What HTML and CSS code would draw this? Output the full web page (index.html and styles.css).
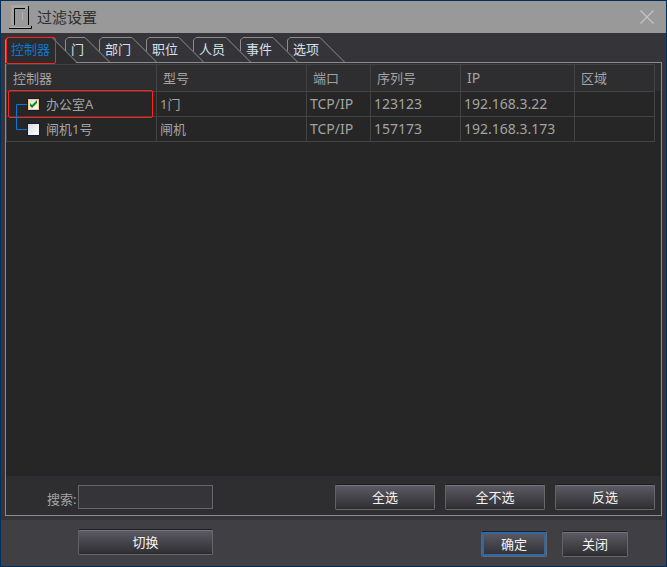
FILE: index.html
```html
<!DOCTYPE html>
<html lang="zh-CN">
<head>
<meta charset="utf-8">
<title>过滤设置</title>
<link rel="stylesheet" href="styles.css">
</head>
<body>
<main class="window">
  <header class="titlebar">
    <svg class="logo" width="24" height="26" viewBox="0 0 24 26" aria-hidden="true">
      <path fill="#a6a6a6" d="M2 1h17v20H2z"/>
      <path fill="#999" d="M6 5h13v16H6z"/>
      <path fill="none" stroke="#000" d="M5.500 21V4.500H16M19.500 2V21M0 24.500H22.500V22"/>
      <path stroke="#b4b4b4" d="M13.500 8v8M1 23.500h20"/>
    </svg>
    <h1 class="title">过滤设置</h1>
    <button class="close" type="button" aria-label="关闭窗口">
      <svg width="14" height="14" viewBox="0 0 14 14" aria-hidden="true"><path d="M.5.500l13 13M13.500.500l-13 13" stroke="#c4c4c4" stroke-width="1.200"/></svg>
    </button>
  </header>

  <section class="body">
    <nav class="tabs" role="tablist">
      <button class="tab tab-wide tab-active" type="button" role="tab" aria-selected="true">
        <svg class="tab-shape" width="74" height="27" aria-hidden="true"><path class="tab-fill" d="M.5 27V3L3 .5H47L72.500 27z"/><path d="M.5 26V3L3 .5H47L72 25.500"/></svg>
        <span class="tab-text">控制器</span>
      </button>
      <button class="tab tab-narrow" type="button" role="tab" aria-selected="false">
        <svg class="tab-shape" width="48" height="26" aria-hidden="true"><path d="M.5 14V3L3 .5H20L45 25.500"/></svg>
        <span class="tab-text">门</span>
      </button>
      <button class="tab" type="button" role="tab" aria-selected="false">
        <svg class="tab-shape" width="60" height="26" aria-hidden="true"><path d="M.5 14V3L3 .5H33L58 25.500"/></svg>
        <span class="tab-text">部门</span>
      </button>
      <button class="tab" type="button" role="tab" aria-selected="false">
        <svg class="tab-shape" width="60" height="26" aria-hidden="true"><path d="M.5 14V3L3 .5H33L58 25.500"/></svg>
        <span class="tab-text">职位</span>
      </button>
      <button class="tab" type="button" role="tab" aria-selected="false">
        <svg class="tab-shape" width="60" height="26" aria-hidden="true"><path d="M.5 14V3L3 .5H33L58 25.500"/></svg>
        <span class="tab-text">人员</span>
      </button>
      <button class="tab" type="button" role="tab" aria-selected="false">
        <svg class="tab-shape" width="60" height="26" aria-hidden="true"><path d="M.5 14V3L3 .5H33L58 25.500"/></svg>
        <span class="tab-text">事件</span>
      </button>
      <button class="tab" type="button" role="tab" aria-selected="false">
        <svg class="tab-shape" width="60" height="26" aria-hidden="true"><path d="M.5 14V3L3 .5H33L58 25.500"/></svg>
        <span class="tab-text">选项</span>
      </button>
    </nav>

    <div class="panel">
      <div class="list">
        <table class="grid">
          <colgroup><col class="c-name"><col class="c-model"><col class="c-port"><col class="c-serial"><col class="c-ip"><col class="c-area"></colgroup>
          <thead>
            <tr><th>控制器</th><th>型号</th><th>端口</th><th>序列号</th><th class="latin">IP</th><th>区域</th></tr>
          </thead>
          <tbody>
            <tr>
              <td class="name name-marked"><svg class="branch" width="12" height="25" aria-hidden="true"><path d="M11 12.500H.5V25"/></svg><input class="check" type="checkbox" id="dev1" checked><label for="dev1">办公室A</label></td>
              <td>1门</td><td class="latin">TCP/IP</td><td class="latin">123123</td><td class="latin">192.168.3.22</td><td></td>
            </tr>
            <tr>
              <td class="name"><svg class="branch" width="12" height="25" aria-hidden="true"><path d="M.5 0V12.500H11"/></svg><input class="check" type="checkbox" id="dev2"><label for="dev2">闸机1号</label></td>
              <td>闸机</td><td class="latin">TCP/IP</td><td class="latin">157173</td><td class="latin">192.168.3.173</td><td></td>
            </tr>
          </tbody>
        </table>
      </div>
      <div class="tools">
        <label class="search-label" for="search">搜索:</label>
        <input class="search" id="search" type="text">
        <div class="picks">
          <button class="btn" type="button">全选</button>
          <button class="btn" type="button">全不选</button>
          <button class="btn" type="button">反选</button>
        </div>
      </div>
    </div>
  </section>

  <footer class="footer">
    <button class="btn btn-switch" type="button">切换</button>
    <div class="actions">
      <button class="btn btn-small btn-default" type="button">确定</button>
      <button class="btn btn-small" type="button">关闭</button>
    </div>
  </footer>
</main>
</body>
</html>
```

FILE: styles.css
```css
* { box-sizing: border-box; }

body {
  margin: 0;
  background: #353439;
  color: #a3a3a3;
  font-family: "Noto Sans", "Noto Sans CJK SC", sans-serif;
  font-size: 13px;
  line-height: 20px;
}

button, input {
  font: inherit;
  color: inherit;
}

.window {
  display: flex;
  flex-direction: column;
  min-height: 100vh;
  border: 1px solid #002f5e;
}

/* Title bar */
.titlebar {
  display: flex;
  align-items: center;
  height: 32px;
  padding: 0 12px 0 8px;
  background: #999;
}

.logo { display: block; }

.title {
  flex: 1;
  margin: 0 0 0 4px;
  color: #2f2f2f;
  font-size: 15px;
  font-weight: 400;
}

.close {
  padding: 0;
  border: 0;
  background: none;
  line-height: 0;
}

/* Tabs */
.body {
  display: flex;
  flex: 1;
  flex-direction: column;
  padding: 4px 4px;
}

.tabs {
  display: flex;
  height: 25px;
}

.tab {
  position: relative;
  width: 47px;
  height: 26px;
  padding: 0 0 2px 6px;
  border: 0;
  background: none;
  color: #d4e0ee;
  line-height: 20px;
  text-align: left;
  white-space: nowrap;
}

.tab-wide { width: 60px; }
.tab-narrow { width: 34px; }

.tab-shape {
  position: absolute;
  top: 0;
  left: 0;
  fill: none;
  stroke: #8c8c8c;
}

.tab-shape .tab-fill {
  fill: #2c2b2e;
  stroke: none;
}

.tab-text { position: relative; }

.tab-active {
  z-index: 1;
  color: #0a78d0;
}

.tab-active::after {
  position: absolute;
  inset: 0 9px -1px 1px;
  border: 1px solid #ff2418;
  border-radius: 2px;
  content: "";
}

/* Panel */
.panel {
  display: flex;
  flex: 1;
  flex-direction: column;
  border: 1px solid #8c8c8c;
  background: #2e2d30;
}

.list {
  flex: 1;
  margin: 1px 1px 0 0;
  background: linear-gradient(#2e2d30 27px, #262626 27px);
}

.grid {
  width: calc(100% - 5px);
  border-collapse: separate;
  border-spacing: 0;
  border-top: 1px solid #414042;
  border-left: 1px solid #414042;
  table-layout: fixed;
}

.c-name, .c-model { width: 150px; }
.c-port { width: 64px; }
.c-serial { width: 90px; }
.c-ip { width: 114px; }

.grid th, .grid td {
  height: 25px;
  padding: 0 0 0 3px;
  border-right: 1px solid #434343;
  border-bottom: 1px solid #434343;
  font-weight: 400;
  text-align: left;
  white-space: nowrap;
}

.grid th {
  height: 27px;
  padding-left: 6px;
}

.grid .latin { font-size: 14px; }

.grid .name {
  position: relative;
  padding-left: 39px;
}

.name-marked::after {
  position: absolute;
  inset: -2px 3px -2px 1px;
  border: 1px solid #ff2418;
  border-radius: 2px;
  content: "";
  pointer-events: none;
}

.branch {
  position: absolute;
  top: 0;
  left: 9px;
  fill: none;
  stroke: #0a78d0;
}

.check {
  position: absolute;
  top: 6px;
  left: 20px;
  width: 13px;
  height: 13px;
  margin: 0;
  border: 1px solid #0c1c4c;
  appearance: none;
  background: linear-gradient(135deg, #dcdcdc, #fff);
}

.check:checked {
  box-shadow: inset 0 0 0 1px #f5c98c;
}

.check:checked::after {
  position: absolute;
  inset: 0;
  background: #128a12;
  clip-path: polygon(2px 4px, 4px 6px, 9px 1px, 9px 4px, 4px 9px, 2px 7px);
  content: "";
}

/* Search and selection tools */
.tools {
  display: flex;
  align-items: center;
  height: 39px;
  padding: 3px 6px 0 41px;
}

.search-label {
  width: 31px;
  padding-top: 4px;
}

.search {
  width: 135px;
  height: 24px;
  padding: 0 4px;
  border: 1px solid #666569;
  background: #353439;
}

.picks {
  display: flex;
  gap: 10px;
  margin-left: auto;
}

.btn {
  width: 100px;
  height: 26px;
  padding: 0;
  border: 1px solid;
  border-color: #1e1e20 #68686b #68686b #626265;
  border-radius: 2px;
  background: linear-gradient(#5e5b66, #4a4950 40%, #343338 90%, #29282c);
  box-shadow: inset 0 1px #77747c;
  color: #f4f4f4;
}

/* Footer */
.footer {
  display: flex;
  align-items: center;
  height: 46px;
  padding: 0 38px 2px 77px;
  background: #403f44;
}

.btn-switch { width: 135px; }

.actions {
  display: flex;
  gap: 15px;
  margin-left: auto;
  padding-top: 4px;
}

.btn-small { width: 66px; }

.btn-default {
  box-shadow: inset 0 0 0 2px #2b6aa6;
}
```
